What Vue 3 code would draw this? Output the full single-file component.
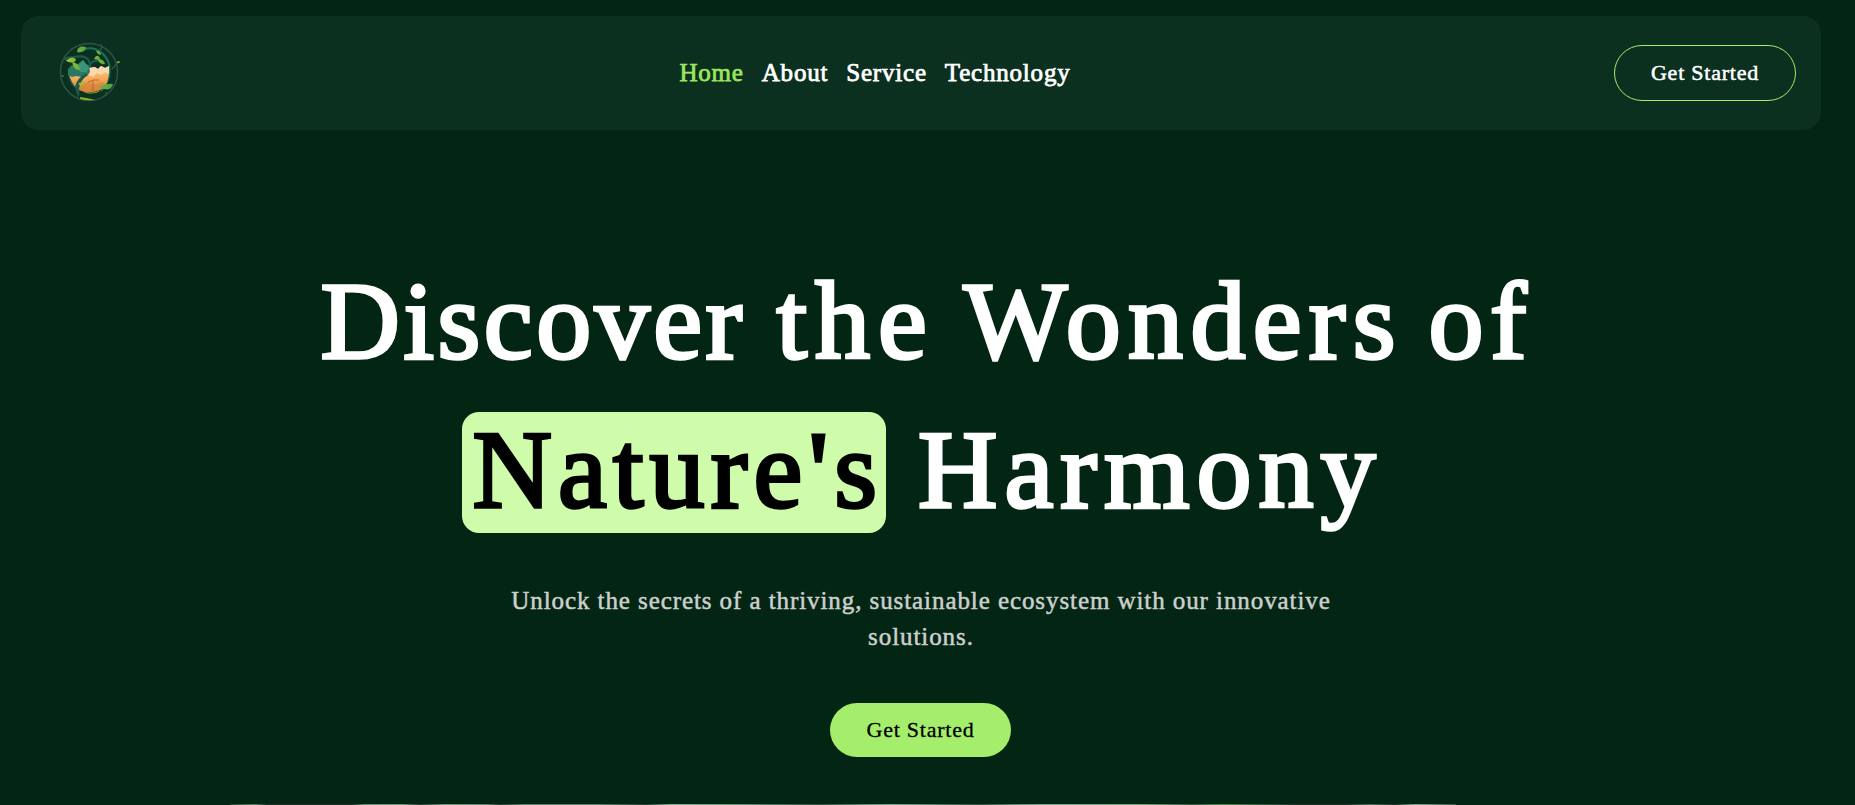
<script setup>
const links = ['Home', 'About', 'Service', 'Technology']
</script>

<template>
  <div class="page">
    <header class="bar">
      <div class="brand">
        <svg class="logo" viewBox="0 0 64 64" aria-label="Eco logo">
          <defs>
            <linearGradient id="sand" x1="0" y1="0" x2="0" y2="1">
              <stop offset="0" stop-color="#ffcf91" />
              <stop offset=".5" stop-color="#f5a857" />
              <stop offset="1" stop-color="#cd7a34" />
            </linearGradient>
            <linearGradient id="leaf" x1="0" y1="0" x2="1" y2="0">
              <stop offset="0" stop-color="#a8c633" />
              <stop offset="1" stop-color="#4fa344" />
            </linearGradient>
          </defs>
          <circle cx="31" cy="32" r="28.6" fill="none" stroke="#2b5548" stroke-width="1.5" />
          <path d="M20 12Q33 4 44 13Q54 22 51 36Q49 45 43 51" fill="none" stroke="#1b705b" stroke-width="2" />
          <path d="M11 31Q10 41 18 48" fill="none" stroke="#1b594c" stroke-width="1.5" />
          <path d="M6 19Q10 17 16 17Q30 14 32 24Q33 30 29 35M7 20Q10 18 14 22M33 24Q34 20 41 21" fill="none" stroke="#1b594c" stroke-width="2.2" />
          <path d="M43 4Q45 9 40 12M54 29L59 23M48 52V56" fill="none" stroke="#26594c" stroke-width="1.3" />
          <path d="M11 34Q12 30 22 30L33 28L37 27L40 29L43 26L47 28L51 26Q52 38 47 47Q38 54 27 52Q15 50 11 34Z" fill="url(#sand)" />
          <path d="M31 28L36 27L40 29L43 26L47 28L51 26V34L47 32L43 35L39 33L35 37L31 35Z" fill="#fbd9b0" />
          <path d="M24 45L30 42L36 45L43 42L48 44Q42 52 30 52Q24 51 22 47Z" fill="#d98740" opacity=".7" />
          <path d="M35 51V41M30 42Q36 39 41 40" fill="none" stroke="#b16229" stroke-width=".9" />
          <path d="M10 35V29L14 25L18 26L21 23L25 20L28 24L31 26L32 32L29 36L24 37L18 36L14 37Z" fill="#2b7861" />
          <path d="M20 25L25 20L28 24L31 26L29 32L22 32Z" fill="#39947a" />
          <path d="M27 34Q19 38 17 47L20 58Q22 57 21 49Q22 40 30 35" fill="#1b5949" />
          <path d="M19 12Q20 5 28 7Q28 13 19 12ZM8 21Q13 15 18 19Q17 25 8 21ZM14 22Q22 23 22 30Q16 31 14 22Z" fill="url(#leaf)" />
          <path d="M36 19Q39 13 42 18Q42 21 36 19ZM40 19Q46 19 47 24Q41 25 40 19ZM38 11Q42 10 43 15L40 14ZM20 44Q23 41 28 43Q25 47 20 44ZM41 47Q48 43 55 44Q53 53 41 47Z" fill="url(#leaf)" />
          <path d="M24 51Q34 55 43 50Q38 55 28 53ZM22 57Q30 58 37 60Q29 61 22 59ZM59 22Q61 20 62 22Q61 24 59 23ZM3 35L6 36L5 37Z" fill="#85ae2b" />
        </svg>
      </div>
      <nav class="links">
        <a v-for="(link, i) in links" :key="link" class="link" :class="{ active: i === 0 }">{{ link }}</a>
      </nav>
      <button class="button outline">Get Started</button>
    </header>
    <main class="hero">
      <h1 class="title">
        <span class="row first">
          <span class="discover">Discover</span>
          <span class="the">the</span>
          <span class="wonders">Wonders</span>
          <span class="of">of</span>
        </span>
        <span class="row second">
          <span class="mark">Nature's</span>
          <span class="harmony">Harmony</span>
        </span>
      </h1>
      <p class="intro">Unlock the secrets of a thriving, sustainable ecosystem with our innovative<br />solutions.</p>
      <button class="button solid">Get Started</button>
      <div class="landscape"></div>
    </main>
  </div>
</template>

<style>
html, body { margin: 0; background: #032514; overflow: hidden; }
</style>

<style scoped>
.page {
  box-sizing: border-box;
  width: 1855px;
  height: 805px;
  padding: 16px 34px 0 21px;
  overflow: hidden;
  background: #032514;
  font-family: "Liberation Serif", serif;
  color: #fff;
}
.bar {
  box-sizing: border-box;
  display: flex;
  justify-content: space-between;
  align-items: center;
  height: 114px;
  padding: 0 25px 0 37px;
  border-radius: 18px;
  background: #0c3020;
}
.brand { width: 78px; }
.logo { width: 64px; height: 64px; margin-top: -2px; display: block; }
.links { display: flex; gap: 18px; }
.link {
  font-size: 25px;
  line-height: 36px;
  letter-spacing: 0.8px;
  -webkit-text-stroke: 0.75px currentColor;
}
.active { color: #9ae65c; }
.button {
  box-sizing: border-box;
  display: flex;
  align-items: center;
  justify-content: center;
  padding: 0;
  border: 0;
  font-family: inherit;
  font-size: 22px;
  letter-spacing: 0.77px;
  -webkit-text-stroke: 0.5px currentColor;
}
.outline {
  width: 182px;
  height: 56px;
  border: 1px solid #a3ee6b;
  border-radius: 28px;
  background: transparent;
  color: #fff;
}
.hero { display: flex; flex-direction: column; align-items: center; }
.title {
  width: 100%;
  margin: 117px 0 0;
  font-size: 110px;
  font-weight: 400;
  line-height: 149px;
  -webkit-text-stroke: 3.4px currentColor;
}
.row { height: 149px; white-space: nowrap; }
.first {
  display: grid;
  grid-template-columns: 456px 187px 465px 110px;
  padding-left: 299.5px;
}
.second { display: flex; align-items: center; padding-left: 441px; }
.discover { letter-spacing: 3.5px; }
.the { letter-spacing: 8px; }
.wonders { letter-spacing: 7.3px; }
.of { letter-spacing: 6.5px; }
.mark {
  box-sizing: border-box;
  width: 424px;
  height: 121px;
  margin-top: 4px;
  padding-left: 10.5px;
  border-radius: 17px;
  background: #cefcaa;
  color: #000;
  line-height: 117px;
  letter-spacing: 6.1px;
}
.harmony { margin-left: 32px; letter-spacing: 7px; }
.intro {
  margin: 38px 0 0;
  color: #ccd0cd;
  font-size: 25px;
  line-height: 36px;
  letter-spacing: 0.92px;
  text-align: center;
  -webkit-text-stroke: 0.5px currentColor;
}
.solid {
  width: 181px;
  height: 54px;
  margin: 48px 1px 0 0;
  border-radius: 27px;
  background: #a4ee6b;
  color: #000;
  -webkit-text-stroke-width: 0.3px;
}
.landscape {
  align-self: flex-start;
  width: 1226px;
  height: 10px;
  margin: 47px 0 0 209px;
  background: linear-gradient(90deg, #24432f, #5b8065 2%, #202f29 3%, #202f29 10%, #658a70 11%, #6f967a 14%, #26382f 15.5%, #71977c 17.5%, #5c806a 21%, #26382f 22%, #5c806a 24%, #5c8068 30%, #26382f 34%, #85b394 36%, #5f8c70 42%, #31503f 48%, #78a78a 54%, #31503f 61%, #78a78a 66%, #78a57e 74%, #35593d 78.5%, #4c8a52 81%, #202f29 87%, #202f29 91%, #506e58 93%, #202f29 95%, #7fa389 96.7%, #3b5545);
}
</style>
